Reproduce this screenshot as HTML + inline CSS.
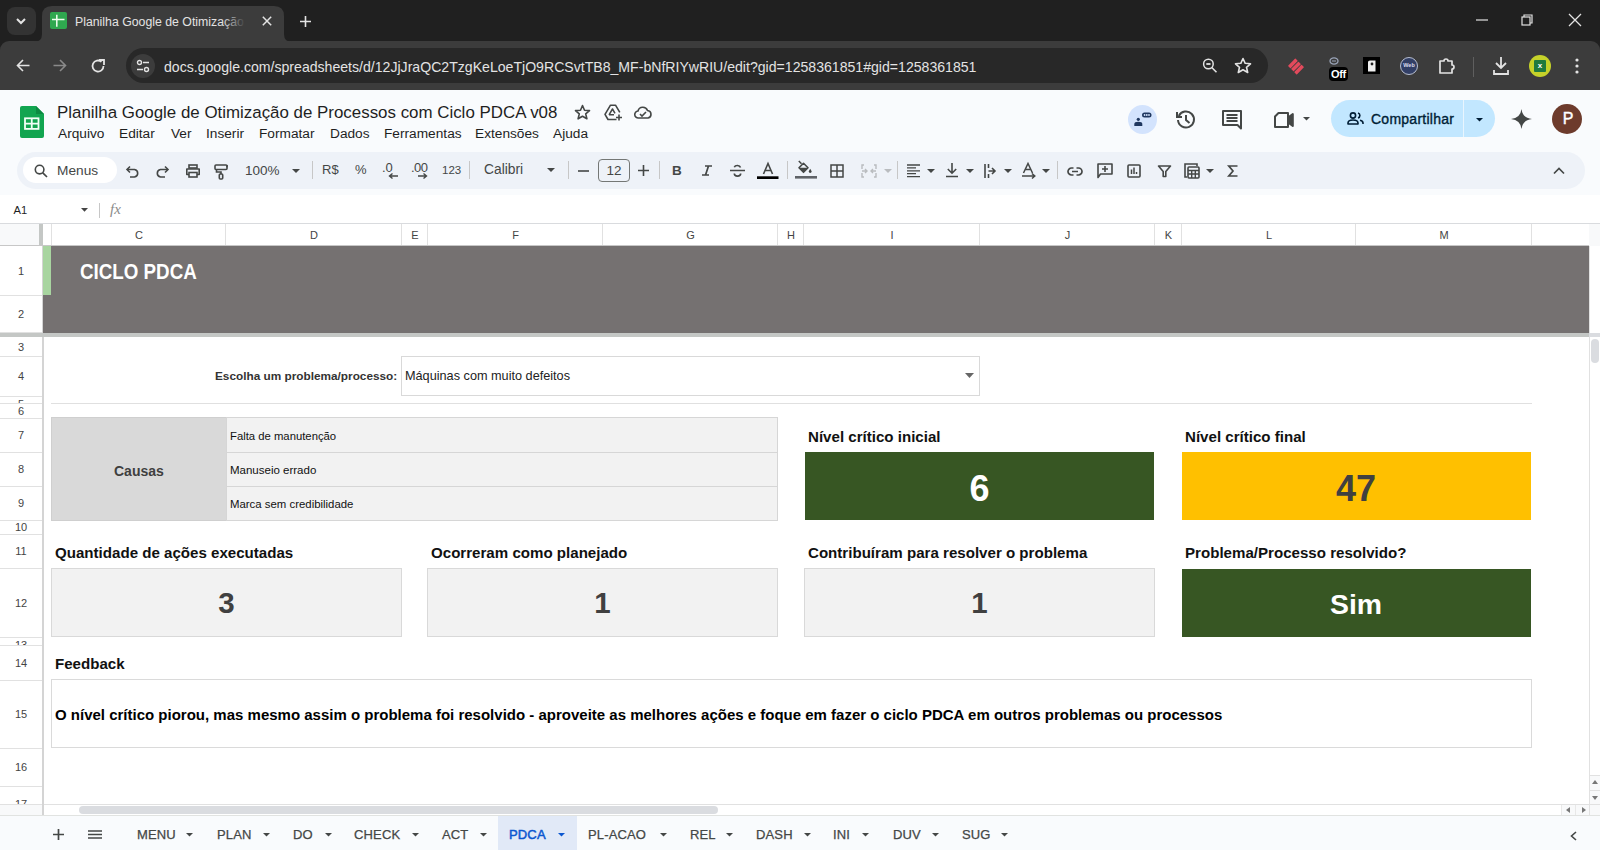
<!DOCTYPE html>
<html><head><meta charset="utf-8">
<style>
*{box-sizing:border-box;margin:0;padding:0}
html,body{width:1600px;height:850px;overflow:hidden;background:#fff;font-family:"Liberation Sans",sans-serif}
.a{position:absolute}
svg{position:absolute;overflow:visible}
/* chrome */
#tabstrip{left:0;top:0;width:1600px;height:90px;background:#202020}
#toolbar{left:0;top:41px;width:1600px;height:49px;background:#3c3c3c;border-radius:9px 9px 0 0}
#tab{left:42px;top:6px;width:242px;height:36px;background:#3c3c3c;border-radius:10px 10px 0 0}
#urlbox{left:126px;top:48px;width:1142px;height:35px;background:#282828;border-radius:18px}
/* sheets */
#app{left:0;top:90px;width:1600px;height:133px;background:#f9fbfd}
#tb{left:17px;top:152px;width:1568px;height:37px;background:#eef2f8;border-radius:19px}
#fbar{left:0;top:195px;width:1600px;height:28px;background:#fff}
.menu{top:126px;font-size:13.7px;color:#1f1f1f;white-space:nowrap}
.colh{top:224px;height:22px;background:#fff;border-right:1px solid #e1e1e1;border-bottom:1px solid #c0c0c0;font-size:11px;color:#444;text-align:center;line-height:22px}
.rowh{left:0;width:42px;background:#fff;border-bottom:1px solid #e1e1e1;border-right:1px solid #c0c0c0;font-size:11px;color:#444;text-align:center}
.cal{font-family:"Liberation Sans",sans-serif}
.tabs{top:815px;height:35px;background:#f9fbfd}
.st{top:826px;font-size:13px;color:#444;letter-spacing:0.3px}
.ch{top:224px;height:22px;font-size:11px;color:#444;text-align:center;line-height:22px}
.vl{top:224px;width:1px;height:22px;background:#e1e1e1}
.rh{left:0;width:43px;overflow:hidden;border-bottom:1px solid #e1e1e1;background:#fff}
.rh span{position:absolute;left:0;width:42px;text-align:center;font-size:11px;color:#444;line-height:14px}
.t{white-space:nowrap;font-weight:bold;line-height:1.15}
.lbl{font-size:15.1px;color:#111}
.big{font-size:29.5px;text-align:center;line-height:40px}
.box{top:568px;height:69px;background:#f2f2f2;border:1px solid #d9d9d9}
.ui{white-space:nowrap;color:#444746;line-height:1.15}
.sep{top:161px;width:1px;height:18px;background:#c7c7c7}
.st{top:828px;font-size:13px;color:#444746;white-space:nowrap;line-height:1.15;-webkit-text-stroke:0.25px #444746;letter-spacing:0.15px}
.ar{position:absolute;top:833px;width:7px;height:4px;fill:#444746}
</style></head><body>
<!-- ============ CHROME ============ -->
<div class="a" id="tabstrip"></div>
<div class="a" id="toolbar"></div>
<div class="a" style="left:7px;top:7px;width:29px;height:28px;background:#333;border-radius:8px"></div>
<svg style="left:15px;top:15px" width="12" height="12"><path d="M2 4 L6 8 L10 4" stroke="#e3e3e3" stroke-width="2" fill="none"/></svg>
<svg style="left:0;top:0" width="320" height="50"><path d="M34 42 Q42 42 42 34 V16 Q42 6 52 6 H274 Q284 6 284 16 V34 Q284 42 292 42 Z" fill="#3c3c3c"/></svg>
<div class="a" style="left:50px;top:12px;width:17px;height:17px;background:#2fa84f;border-radius:2px"></div>
<svg style="left:50px;top:12px" width="17" height="17"><path d="M6.8 2.8 V14.7 M2 7.4 H14.5" stroke="#f0fff0" stroke-width="1.5"/></svg>
<div class="a" style="left:75px;top:15px;font-size:12.3px;color:#e3e3e3;white-space:nowrap;width:172px;overflow:hidden">Planilha Google de Otimização de</div><div class="a" style="left:222px;top:10px;width:26px;height:22px;background:linear-gradient(90deg,rgba(60,60,60,0),#3c3c3c 90%)"></div>
<svg style="left:262px;top:16px" width="10" height="10"><path d="M0.8 0.8 L9.2 9.2 M9.2 0.8 L0.8 9.2" stroke="#e3e3e3" stroke-width="1.5"/></svg>
<svg style="left:300px;top:15.5px" width="11" height="11"><path d="M5.5 0 V11 M0 5.5 H11" stroke="#e3e3e3" stroke-width="1.6"/></svg>
<!-- window controls -->
<svg style="left:1476px;top:19px" width="12" height="2"><path d="M0 1 H12" stroke="#e3e3e3" stroke-width="1.2"/></svg>
<svg style="left:1521px;top:14px" width="12" height="12"><rect x="1" y="3" width="8" height="8" stroke="#e3e3e3" fill="none" stroke-width="1.2"/><path d="M3 3 V1 H11 V9 H9" stroke="#e3e3e3" fill="none" stroke-width="1.2"/></svg>
<svg style="left:1569px;top:14px" width="12" height="12"><path d="M0 0 L12 12 M12 0 L0 12" stroke="#e3e3e3" stroke-width="1.3"/></svg>


<svg style="left:16px;top:59px" width="14" height="14"><path d="M13.5 6.5 H1.5 M7 1 L1.5 6.5 L7 12" stroke="#e3e3e3" stroke-width="1.6" fill="none"/></svg>
<svg style="left:53px;top:59px" width="14" height="14"><path d="M0.5 6.5 H12.5 M7 1 L12.5 6.5 L7 12" stroke="#8a8a8a" stroke-width="1.6" fill="none"/></svg>
<svg style="left:90px;top:58px" width="16" height="16"><path d="M13.5 8 A5.5 5.5 0 1 1 11.5 3.8" stroke="#e3e3e3" stroke-width="1.8" fill="none"/><path d="M9 2 H14 V7" stroke="#e3e3e3" stroke-width="1.8" fill="none"/></svg>
<div class="a" id="urlbox"></div>
<div class="a" style="left:131px;top:54px;width:24px;height:24px;border-radius:12px;background:#3c3c3c"></div>
<svg style="left:136px;top:59px" width="14" height="14"><circle cx="3.5" cy="3.5" r="2" stroke="#e3e3e3" stroke-width="1.4" fill="none"/><path d="M7 3.5 H13 M1 10.5 H7" stroke="#e3e3e3" stroke-width="1.4"/><circle cx="10.5" cy="10.5" r="2" stroke="#e3e3e3" stroke-width="1.4" fill="none"/></svg>
<div class="a" style="left:164px;top:58.5px;font-size:14.1px;color:#e3e3e3;white-space:nowrap">docs.google.com/spreadsheets/d/12JjJraQC2TzgKeLoeTjO9RCSvtTB8_MF-bNfRIYwRIU/edit?gid=1258361851#gid=1258361851</div>
<svg style="left:1201px;top:57px" width="18" height="18"><circle cx="7.4" cy="7" r="4.8" stroke="#e3e3e3" stroke-width="1.5" fill="none"/><path d="M10.8 10.5 L15.5 15.2" stroke="#e3e3e3" stroke-width="1.6"/><path d="M5.3 7 H9.5" stroke="#e3e3e3" stroke-width="1.8"/></svg>
<svg style="left:1234px;top:57px" width="18" height="18"><path d="M9 1.5 L11.2 6.3 L16.5 6.8 L12.5 10.3 L13.7 15.5 L9 12.8 L4.3 15.5 L5.5 10.3 L1.5 6.8 L6.8 6.3 Z" stroke="#e3e3e3" stroke-width="1.6" fill="none" stroke-linejoin="round"/></svg>
<!-- extensions -->
<svg style="left:1287px;top:57px" width="18" height="19"><g transform="rotate(-45 9 9.5)" fill="#e24a5c"><rect x="3.75" y="3.3" width="10.5" height="3.6" rx="0.6"/><rect x="3.75" y="7.7" width="10.5" height="3.6" rx="0.6"/><rect x="3.75" y="12.1" width="10.5" height="3.6" rx="0.6"/></g></svg>
<svg style="left:1329px;top:57px" width="11" height="9"><ellipse cx="5" cy="4" rx="4" ry="3.2" stroke="#9aa4b8" stroke-width="1.3" fill="none"/><path d="M3 4 H7" stroke="#9aa4b8" stroke-width="1"/></svg>
<div class="a" style="left:1329px;top:67px;width:19px;height:14px;background:#000;border-radius:4px;color:#fff;font-size:11px;font-weight:bold;line-height:14px;text-align:center;letter-spacing:-0.3px">Off</div>
<div class="a" style="left:1363px;top:57px;width:17px;height:17px;background:#000"></div>
<svg style="left:1367px;top:60px" width="9" height="12"><path d="M1 2 Q1 0.5 3 0.5 H8.5 V11.5 H1 Z" fill="#f0f0f0"/><circle cx="5" cy="4" r="1.4" fill="#222"/></svg>
<div class="a" style="left:1400px;top:57px;width:18px;height:18px;border-radius:9px;background:#323f66;border:1.5px solid #b8bfd0"></div>
<div class="a" style="left:1402px;top:62px;width:14px;font-size:5.5px;font-weight:bold;color:#dde;text-align:center;line-height:6px">Web</div>
<svg style="left:1437px;top:57px" width="19" height="18"><path d="M3 4 H7 A2 2 0 0 1 11 4 H15 V8 A2 2 0 0 1 15 12 V16 H3 Z" stroke="#e3e3e3" stroke-width="1.7" fill="none" stroke-linejoin="round"/></svg>
<div class="a" style="left:1473px;top:57px;width:1px;height:20px;background:#5f5f5f"></div>
<svg style="left:1492px;top:56px" width="18" height="20"><path d="M9 1 V12 M4 7 L9 12 L14 7 M2 14 V18 H16 V14" stroke="#e3e3e3" stroke-width="1.8" fill="none"/></svg>
<div class="a" style="left:1529px;top:55px;width:22px;height:22px;border-radius:11px;background:#c5d22a"></div>
<div class="a" style="left:1534px;top:60px;width:12px;height:12px;background:#1f7a3e;border-radius:1px;color:#fff;font-size:8px;font-weight:bold;line-height:12px;text-align:center">x</div>
<svg style="left:1574px;top:57px" width="6" height="18"><circle cx="3" cy="3" r="1.6" fill="#e3e3e3"/><circle cx="3" cy="9" r="1.6" fill="#e3e3e3"/><circle cx="3" cy="15" r="1.6" fill="#e3e3e3"/></svg>

<!-- ============ SHEETS APP HEADER ============ -->
<div class="a" id="app"></div>
<svg style="left:20px;top:106px" width="24" height="32"><path d="M2 0 H16 L24 8 V30 A2 2 0 0 1 22 32 H2 A2 2 0 0 1 0 30 V2 A2 2 0 0 1 2 0 Z" fill="#12a550"/><path d="M16 0 V8 H24 Z" fill="#0d8a42"/><rect x="5" y="12.3" width="13.5" height="10.6" fill="none" stroke="#f2fff6" stroke-width="1.8"/><path d="M5 17.6 H18.5 M11.75 12.3 V22.9" stroke="#f2fff6" stroke-width="1.8"/></svg>
<div class="a" style="left:57px;top:103px;font-size:16.9px;color:#1f1f1f;white-space:nowrap">Planilha Google de Otimização de Processos com Ciclo PDCA v08</div>
<div class="a menu" style="left:58px">Arquivo</div>
<div class="a menu" style="left:119px">Editar</div>
<div class="a menu" style="left:171px">Ver</div>
<div class="a menu" style="left:206px">Inserir</div>
<div class="a menu" style="left:259px">Formatar</div>
<div class="a menu" style="left:330px">Dados</div>
<div class="a menu" style="left:384px">Ferramentas</div>
<div class="a menu" style="left:475px">Extensões</div>
<div class="a menu" style="left:553px">Ajuda</div>

<!-- toolbar pill -->
<div class="a" id="tb"></div>
<div class="a" style="left:23px;top:157px;width:94px;height:26px;background:#fff;border-radius:13px"></div>
<div class="a ui" style="left:57px;top:163px;font-size:13.7px;color:#444746">Menus</div>

<!-- toolbar icons -->
<svg style="left:34px;top:164px" width="14" height="14"><circle cx="5.6" cy="5.6" r="4.3" stroke="#444746" stroke-width="1.6" fill="none"/><path d="M8.8 8.8 L13 13" stroke="#444746" stroke-width="1.7"/></svg>
<svg style="left:126px;top:165px" width="14" height="14"><path d="M4 1.5 L1 4.5 L4 7.5" stroke="#444746" stroke-width="1.6" fill="none"/><path d="M1.5 4.5 H8.5 A3.8 3.8 0 0 1 8.5 12 H4" stroke="#444746" stroke-width="1.6" fill="none"/></svg>
<svg style="left:155px;top:165px" width="14" height="14"><path d="M10 1.5 L13 4.5 L10 7.5" stroke="#444746" stroke-width="1.6" fill="none"/><path d="M12.5 4.5 H5.5 A3.8 3.8 0 0 0 5.5 12 H10" stroke="#444746" stroke-width="1.6" fill="none"/></svg>
<svg style="left:185px;top:164px" width="16" height="14"><rect x="4" y="1" width="8" height="3" stroke="#444746" stroke-width="1.6" fill="none"/><path d="M4 10.5 H1.8 V5 H14.2 V10.5 H12" stroke="#444746" stroke-width="1.6" fill="none" stroke-linejoin="round"/><rect x="4" y="8.5" width="8" height="4.5" stroke="#444746" stroke-width="1.6" fill="none"/></svg>
<svg style="left:214px;top:164px" width="14" height="16"><rect x="1" y="1" width="12" height="4.5" rx="1" stroke="#444746" stroke-width="1.6" fill="none"/><path d="M13 3.2 V1 M2.5 5.5 V8 H7 V10" stroke="#444746" stroke-width="1.6" fill="none"/><rect x="5.3" y="10" width="3.4" height="5" rx="1" stroke="#444746" stroke-width="1.6" fill="none"/></svg>
<div class="a ui" style="left:245px;top:163px;font-size:13.5px">100%</div>
<svg style="left:292px;top:169px" width="8" height="4"><path d="M0 0 H8 L4 4 Z" fill="#444746"/></svg>
<div class="a sep" style="left:312px"></div>
<div class="a ui" style="left:322px;top:163px;font-size:13px">R$</div>
<div class="a ui" style="left:355px;top:163px;font-size:13px">%</div>
<div class="a ui" style="left:382px;top:161px;font-size:13px">.0</div>
<svg style="left:388px;top:173px" width="10" height="6"><path d="M10 3 H2 M4.5 0.5 L1.5 3 L4.5 5.5" stroke="#444746" stroke-width="1.4" fill="none"/></svg>
<div class="a ui" style="left:411px;top:161px;font-size:13px;letter-spacing:-0.5px">.00</div>
<svg style="left:418px;top:173px" width="10" height="6"><path d="M0 3 H8 M5.5 0.5 L8.5 3 L5.5 5.5" stroke="#444746" stroke-width="1.4" fill="none"/></svg>
<div class="a ui" style="left:442px;top:164px;font-size:11.5px">123</div>
<div class="a sep" style="left:469px"></div>
<div class="a ui" style="left:484px;top:162px;font-size:13.8px">Calibri</div>
<svg style="left:547px;top:168px" width="8" height="4"><path d="M0 0 H8 L4 4 Z" fill="#444746"/></svg>
<div class="a sep" style="left:568px"></div>
<svg style="left:578px;top:170px" width="11" height="2"><path d="M0 1 H11" stroke="#444746" stroke-width="1.6"/></svg>
<div class="a" style="left:598px;top:159px;width:32px;height:23px;border:1px solid #747775;border-radius:4px"></div>
<div class="a ui" style="left:598px;top:163px;width:32px;text-align:center;font-size:13.5px">12</div>
<svg style="left:638px;top:165px" width="11" height="11"><path d="M5.5 0 V11 M0 5.5 H11" stroke="#444746" stroke-width="1.6"/></svg>
<div class="a sep" style="left:659px"></div>
<div class="a ui" style="left:672px;top:163px;font-size:13.5px;font-weight:bold">B</div>
<svg style="left:701px;top:165px" width="12" height="11"><path d="M4 1 H11 M1 10 H8 M7.5 1 L4.5 10" stroke="#444746" stroke-width="1.7" fill="none"/></svg>
<svg style="left:730px;top:164px" width="15" height="13"><path d="M0 6.5 H15" stroke="#444746" stroke-width="1.5"/><path d="M10.5 3.5 A3.2 2.6 0 0 0 4.3 3.3" stroke="#444746" stroke-width="1.6" fill="none"/><path d="M4.3 9.5 A3.2 2.6 0 0 0 10.7 9.5" stroke="#444746" stroke-width="1.6" fill="none"/></svg>
<svg style="left:757px;top:162px" width="22" height="18"><path d="M6.5 12 L11 1.5 L15.5 12 M8 8.5 H14" stroke="#444746" stroke-width="1.6" fill="none"/><rect x="0" y="14.3" width="21.5" height="2.7" fill="#000"/></svg>
<div class="a sep" style="left:787px"></div>
<svg style="left:795px;top:160px" width="22" height="20"><path d="M3.8 1 L6.5 3.8" stroke="#444746" stroke-width="1.5"/><path d="M8.5 3.3 L13 7.8 L8.5 12.3 L4 7.8 Z" stroke="#444746" stroke-width="1.6" fill="none" stroke-linejoin="round"/><path d="M4 7.8 H13 L8.5 12.3 Z" fill="#444746"/><path d="M15.2 8.8 Q13.8 10.8 13.8 11.6 A1.4 1.4 0 0 0 16.6 11.6 Q16.6 10.8 15.2 8.8 Z" fill="#444746"/><rect x="0" y="16" width="22" height="2.6" fill="#5f6368"/></svg>
<svg style="left:830px;top:164px" width="14" height="14"><rect x="1" y="1" width="12" height="12" stroke="#444746" stroke-width="1.5" fill="none"/><path d="M7 1 V13 M1 7 H13" stroke="#444746" stroke-width="1.5"/></svg>
<svg style="left:861px;top:164px" width="16" height="14"><path d="M3 1 H1 V5 M1 9 V13 H3 M13 1 H15 V5 M15 9 V13 H13" stroke="#b9bcbf" stroke-width="1.4" fill="none"/><path d="M1 7 H6 M4 5 L6 7 L4 9 M15 7 H10 M12 5 L10 7 L12 9" stroke="#b9bcbf" stroke-width="1.4" fill="none"/></svg>
<svg style="left:884px;top:169px" width="8" height="4"><path d="M0 0 H8 L4 4 Z" fill="#b9bcbf"/></svg>
<div class="a sep" style="left:897px"></div>
<svg style="left:907px;top:164px" width="14" height="14"><path d="M0 1 H13 M0 3.9 H9 M0 6.8 H13 M0 9.7 H9 M0 12.6 H13" stroke="#444746" stroke-width="1.3"/></svg>
<svg style="left:927px;top:169px" width="8" height="4"><path d="M0 0 H8 L4 4 Z" fill="#444746"/></svg>
<svg style="left:946px;top:163px" width="12" height="15"><path d="M6 0 V10 M1.8 6 L6 10.2 L10.2 6 M0 13.5 H12" stroke="#444746" stroke-width="1.6" fill="none"/></svg>
<svg style="left:966px;top:169px" width="8" height="4"><path d="M0 0 H8 L4 4 Z" fill="#444746"/></svg>
<svg style="left:984px;top:164px" width="12" height="14"><path d="M1 0 V14 M4.5 0 V4 M4.5 10 V14 M4.5 7 H11 M8 4 L11 7 L8 10" stroke="#444746" stroke-width="1.6" fill="none"/></svg>
<svg style="left:1004px;top:169px" width="8" height="4"><path d="M0 0 H8 L4 4 Z" fill="#444746"/></svg>
<svg style="left:1022px;top:163px" width="14" height="15"><path d="M1.5 10 L6 0.5 L10.5 10 M3.2 6.5 H8.8 M0 13 H12.5 M10 10.5 L12.8 13 L10 15.5" stroke="#444746" stroke-width="1.5" fill="none"/></svg>
<svg style="left:1042px;top:169px" width="8" height="4"><path d="M0 0 H8 L4 4 Z" fill="#444746"/></svg>
<div class="a sep" style="left:1057px"></div>
<svg style="left:1067px;top:167px" width="16" height="9"><path d="M6.5 1 H4.5 A3.5 3.5 0 0 0 4.5 8 H6.5 M9.5 1 H11.5 A3.5 3.5 0 0 1 11.5 8 H9.5 M5 4.5 H11" stroke="#444746" stroke-width="1.7" fill="none"/></svg>
<svg style="left:1097px;top:163px" width="16" height="15"><path d="M1 14.5 V1 H15 V11 H3.5 Z" stroke="#444746" stroke-width="1.6" fill="none" stroke-linejoin="round"/><path d="M8 3 V9 M5 6 H11" stroke="#444746" stroke-width="1.6"/></svg>
<svg style="left:1127px;top:164px" width="14" height="14"><rect x="1" y="1" width="12" height="12" rx="1" stroke="#444746" stroke-width="1.6" fill="none"/><path d="M4.5 5.5 V10 M7 3.5 V10 M9.5 8 V10" stroke="#444746" stroke-width="1.5"/></svg>
<svg style="left:1158px;top:165px" width="13" height="12"><path d="M0.5 1 H12.5 L7.8 6.5 V11.5 H5.2 V6.5 Z" stroke="#444746" stroke-width="1.6" fill="none" stroke-linejoin="round"/></svg>
<svg style="left:1184px;top:163px" width="16" height="16"><path d="M3 14 H1 V1 H13 V3" stroke="#444746" stroke-width="1.6" fill="none"/><rect x="4" y="4" width="11" height="11" rx="1" stroke="#444746" stroke-width="1.6" fill="none"/><path d="M4 7.5 H15 M4 11 H15 M7.7 7.5 V15 M11.3 7.5 V15" stroke="#444746" stroke-width="1.4"/></svg>
<svg style="left:1206px;top:169px" width="8" height="4"><path d="M0 0 H8 L4 4 Z" fill="#444746"/></svg>
<svg style="left:1228px;top:165px" width="10" height="12"><path d="M9.5 1 H0.8 L5 6 L0.8 11 H9.5" stroke="#444746" stroke-width="1.7" fill="none" stroke-linejoin="miter"/></svg>
<svg style="left:1553px;top:167px" width="12" height="8"><path d="M1 6.5 L6 1.5 L11 6.5" stroke="#444746" stroke-width="1.7" fill="none"/></svg>

<!-- header right -->
<div class="a" style="left:1128px;top:105px;width:29px;height:29px;border-radius:15px;background:#d3e3fd"></div>
<svg style="left:1133px;top:111px" width="20" height="16"><circle cx="5.3" cy="8.3" r="1.6" fill="#1f3760"/><path d="M1.3 15 V13 Q1.3 10.8 5.3 10.8 Q9.3 10.8 9.3 13 V15 Z" fill="#1f3760"/><rect x="9" y="1.5" width="9.5" height="5" rx="2.5" fill="#1f3760"/><circle cx="11.6" cy="4" r="0.9" fill="#d3e3fd"/><circle cx="13.8" cy="4" r="0.9" fill="#d3e3fd"/><circle cx="16" cy="4" r="0.9" fill="#d3e3fd"/></svg>
<svg style="left:1176px;top:110px" width="20" height="19"><path d="M2.8 6 A8 8 0 1 1 2 10" stroke="#444746" stroke-width="2" fill="none"/><path d="M1 2 V7 H6" stroke="#444746" stroke-width="2" fill="none"/><path d="M10 5 V10 L13.5 13" stroke="#444746" stroke-width="2" fill="none"/></svg>
<svg style="left:1222px;top:110px" width="20" height="19"><path d="M1 1 H19 V18.5 L15.5 15 H1 Z" stroke="#444746" stroke-width="2" fill="none" stroke-linejoin="round"/><path d="M4.5 5 H15.5 M4.5 8 H15.5 M4.5 11 H15.5" stroke="#444746" stroke-width="1.8"/></svg>
<svg style="left:1274px;top:112px" width="20" height="16"><path d="M4.5 1 H14 V15 H1 V4.5 Z" stroke="#444746" stroke-width="2" fill="none" stroke-linejoin="round"/><path d="M14 5.5 L18.8 2 V14 L14 10.5 Z" stroke="#444746" stroke-width="2" fill="#444746" stroke-linejoin="round"/></svg>
<svg style="left:1303px;top:117px" width="7" height="4"><path d="M0 0 H7 L3.5 3.5 Z" fill="#444746"/></svg>
<div class="a" style="left:1331px;top:100px;width:164px;height:37px;border-radius:19px;background:#c2e7ff"></div>
<div class="a" style="left:1463px;top:100px;width:1px;height:37px;background:#f9fbfd;opacity:0.7"></div>
<svg style="left:1347px;top:112px" width="17" height="13"><circle cx="6" cy="3.5" r="2.6" stroke="#001d35" stroke-width="1.6" fill="none"/><path d="M1 12 V11 Q1 8 6 8 Q11 8 11 11 V12 Z" stroke="#001d35" stroke-width="1.6" fill="none" stroke-linejoin="round"/><path d="M11 1 A2.6 2.6 0 0 1 11 6 M13 8.3 Q16 9 16 11 V12" stroke="#001d35" stroke-width="1.6" fill="none"/></svg>
<div class="a ui" style="left:1371px;top:110.5px;font-size:14px;letter-spacing:0.25px;color:#001d35;-webkit-text-stroke:0.35px #001d35">Compartilhar</div>
<svg style="left:1476px;top:118px" width="7" height="4"><path d="M0 0 H7 L3.5 3.5 Z" fill="#001d35"/></svg>
<svg style="left:1511px;top:109px" width="21" height="20"><path d="M10.5 0 Q11.5 9 21 10 Q11.5 11 10.5 20 Q9.5 11 0 10 Q9.5 9 10.5 0 Z" fill="#444746"/></svg>
<div class="a" style="left:1552px;top:104px;width:30px;height:30px;border-radius:15px;background:#6d3b2c"></div>
<div class="a ui" style="left:1553px;top:110px;width:30px;text-align:center;font-size:16px;color:#fff;-webkit-text-stroke:0.4px #fff">P</div>
<!-- title star etc -->
<svg style="left:574px;top:104px" width="17" height="17"><path d="M8.5 1.5 L10.5 6.2 L15.5 6.6 L11.7 9.9 L12.9 14.8 L8.5 12.2 L4.1 14.8 L5.3 9.9 L1.5 6.6 L6.5 6.2 Z" stroke="#444746" stroke-width="1.6" fill="none" stroke-linejoin="round"/></svg>
<svg style="left:604px;top:104px" width="19" height="17"><path d="M12.5 15.5 H4 L1 10.3 L6.5 1.2 H11.5 L15.8 8.4" stroke="#444746" stroke-width="1.6" fill="none" stroke-linejoin="round"/><path d="M5 10.8 L8.5 5 L11 9.3 M5 10.8 H10" stroke="#444746" stroke-width="1.5" fill="none" stroke-linejoin="round"/><path d="M15 10.5 V16.5 M12 13.5 H18" stroke="#444746" stroke-width="1.6"/></svg>
<svg style="left:634px;top:106px" width="18" height="13"><path d="M4.5 12 A3.5 3.5 0 0 1 4 5 A5 5 0 0 1 13.5 4.5 A3.8 3.8 0 0 1 14 12 Z" stroke="#444746" stroke-width="1.6" fill="none"/><path d="M6 8 L8 10 L12 6" stroke="#444746" stroke-width="1.6" fill="none"/></svg>

<!-- scrollbars -->
<div class="a" style="left:1589px;top:246px;width:11px;height:569px;background:#fff;border-left:1px solid #e1e1e1"></div>
<div class="a" style="left:1589px;top:224px;width:11px;height:22px;background:#f8f9fa"></div>
<div class="a" style="left:1589px;top:333px;width:11px;height:4px;background:#dadce0"></div>
<div class="a" style="left:1591px;top:339px;width:8px;height:24px;border-radius:4px;background:#dadce0"></div>
<div class="a" style="left:1590px;top:775px;width:10px;height:15px;background:#f8f9fa;border-top:1px solid #e1e1e1"></div>
<svg style="left:1592px;top:780px" width="6" height="4"><path d="M0 4 H6 L3 0 Z" fill="#777"/></svg>
<div class="a" style="left:1590px;top:790px;width:10px;height:14px;background:#f8f9fa;border-top:1px solid #e1e1e1"></div>
<svg style="left:1592px;top:796px" width="6" height="4"><path d="M0 0 H6 L3 4 Z" fill="#777"/></svg>
<div class="a" style="left:0;top:804px;width:1600px;height:1px;background:#e1e1e1"></div>
<div class="a" style="left:0;top:805px;width:42px;height:10px;background:#f8f9fa"></div>
<div class="a" style="left:43px;top:805px;width:1546px;height:10px;background:#fff"></div>
<div class="a" style="left:79px;top:806px;width:639px;height:8px;border-radius:4px;background:#dadce0"></div>
<div class="a" style="left:1561px;top:805px;width:28px;height:10px;background:#f8f9fa;border-left:1px solid #e8e8e8"></div>
<div class="a" style="left:1575px;top:805px;width:1px;height:10px;background:#e8e8e8"></div>
<svg style="left:1566px;top:807px" width="4" height="6"><path d="M4 0 V6 L0 3 Z" fill="#777"/></svg>
<svg style="left:1582px;top:807px" width="4" height="6"><path d="M0 0 V6 L4 3 Z" fill="#777"/></svg>
<div class="a" style="left:1589px;top:805px;width:11px;height:10px;background:#f8f9fa;border-left:1px solid #e1e1e1"></div>

<!-- formula bar -->
<div class="a" id="fbar"></div>
<div class="a" style="left:13.5px;top:203.5px;font-size:11.2px;color:#1f1f1f">A1</div>
<svg style="left:81px;top:208px" width="7" height="4"><path d="M0 0 H7 L3.5 3.7 Z" fill="#444"/></svg>
<div class="a" style="left:99px;top:203px;width:1px;height:15px;background:#c7c7c7"></div>
<div class="a" style="left:110px;top:201px;font-size:15px;color:#8a8a8a;font-family:'Liberation Serif',serif;font-style:italic">fx</div>

<!-- ============ GRID ============ -->
<!-- GRID HEADERS -->
<div class="a" style="left:0;top:223px;width:1600px;height:1px;background:#d9dbde"></div>
<div class="a" style="left:0;top:224px;width:39px;height:22px;background:#f8f9fa"></div>
<div class="a" style="left:39px;top:224px;width:4px;height:22px;background:#c4c7c5"></div>
<div class="a ch" style="left:52px;width:174px">C</div><div class="a vl" style="left:51px"></div>
<div class="a ch" style="left:226px;width:176px">D</div><div class="a vl" style="left:225px"></div>
<div class="a ch" style="left:402px;width:26px">E</div><div class="a vl" style="left:401px"></div>
<div class="a ch" style="left:428px;width:175px">F</div><div class="a vl" style="left:427px"></div>
<div class="a ch" style="left:603px;width:175px">G</div><div class="a vl" style="left:602px"></div>
<div class="a ch" style="left:778px;width:26px">H</div><div class="a vl" style="left:777px"></div>
<div class="a ch" style="left:804px;width:176px">I</div><div class="a vl" style="left:803px"></div>
<div class="a ch" style="left:980px;width:175px">J</div><div class="a vl" style="left:979px"></div>
<div class="a ch" style="left:1155px;width:27px">K</div><div class="a vl" style="left:1154px"></div>
<div class="a ch" style="left:1182px;width:174px">L</div><div class="a vl" style="left:1181px"></div>
<div class="a ch" style="left:1356px;width:176px">M</div><div class="a vl" style="left:1355px"></div>
<div class="a ch" style="left:1532px;width:57px"></div><div class="a vl" style="left:1531px"></div>
<div class="a" style="left:0;top:245px;width:1589px;height:1px;background:#c7c7c7"></div>
<div class="a rh" style="top:246px;height:50px"><span style="top:17.6px">1</span></div>
<div class="a rh" style="top:296px;height:37px"><span style="top:11.1px">2</span></div>
<div class="a rh" style="top:338px;height:19px"><span style="top:1.6px">3</span></div>
<div class="a rh" style="top:357px;height:40px"><span style="top:12.1px">4</span></div>
<div class="a rh" style="top:397px;height:7px"><span style="top:0.1px">5</span></div>
<div class="a rh" style="top:404px;height:15px"><span style="top:-0.4px">6</span></div>
<div class="a rh" style="top:419px;height:34px"><span style="top:9.1px">7</span></div>
<div class="a rh" style="top:453px;height:34px"><span style="top:9.1px">8</span></div>
<div class="a rh" style="top:487px;height:34px"><span style="top:9.1px">9</span></div>
<div class="a rh" style="top:521px;height:14px"><span style="top:-0.9px">10</span></div>
<div class="a rh" style="top:535px;height:34px"><span style="top:9.1px">11</span></div>
<div class="a rh" style="top:569px;height:69px"><span style="top:26.6px">12</span></div>
<div class="a rh" style="top:638px;height:8px"><span style="top:0.1px">13</span></div>
<div class="a rh" style="top:646px;height:35px"><span style="top:9.6px">14</span></div>
<div class="a rh" style="top:681px;height:68px"><span style="top:26.1px">15</span></div>
<div class="a rh" style="top:749px;height:38px"><span style="top:11.1px">16</span></div>
<div class="a rh" style="top:787px;height:18px"><span style="top:10.1px">17</span></div>
<div class="a" style="left:42px;top:246px;width:2px;height:569px;background:#d4d4d4"></div>
<div class="a" style="left:0;top:333px;width:1589px;height:4px;background:#c4c7c5"></div>
<!-- CONTENT -->
<div class="a" style="left:43px;top:246px;width:1546px;height:87px;background:#757171"></div>
<div class="a" style="left:43px;top:246px;width:8px;height:49px;background:#a8d5a0"></div>
<div class="a" style="left:80px;top:259px;font-size:21.7px;line-height:25px;font-weight:bold;color:#fff;white-space:nowrap;transform:scaleX(0.865);transform-origin:0 0">CICLO PDCA</div>

<div class="a t" style="left:215px;top:369.5px;font-size:11.8px;color:#333">Escolha um problema/processo:</div>
<div class="a" style="left:401px;top:356px;width:579px;height:40px;border:1px solid #d9d9d9;background:#fff"></div>
<div class="a t" style="left:405px;top:369px;font-size:12.7px;font-weight:normal;color:#222">Máquinas com muito defeitos</div>
<svg style="left:965px;top:373px" width="9" height="5"><path d="M0 0 H9 L4.5 5 Z" fill="#666"/></svg>
<div class="a" style="left:51px;top:403px;width:1481px;height:1px;background:#e0e0e0"></div>

<div class="a" style="left:51px;top:417px;width:176px;height:104px;background:#d9d9d9;border:1px solid #cfcfcf"></div>
<div class="a t" style="left:114px;top:463px;font-size:14px;color:#3f3f3f">Causas</div>
<div class="a" style="left:226px;top:417px;width:552px;height:104px;background:#f2f2f2;border:1px solid #d6d6d6"></div>
<div class="a" style="left:227px;top:452px;width:551px;height:1px;background:#d6d6d6"></div>
<div class="a" style="left:227px;top:486px;width:551px;height:1px;background:#d6d6d6"></div>
<div class="a t" style="left:230px;top:430px;font-size:11.3px;font-weight:normal;color:#111">Falta de manutenção</div>
<div class="a t" style="left:230px;top:464px;font-size:11.5px;font-weight:normal;color:#111">Manuseio errado</div>
<div class="a t" style="left:230px;top:498px;font-size:11.4px;font-weight:normal;color:#111">Marca sem credibilidade</div>

<div class="a t lbl" style="left:808px;top:427.5px">Nível crítico inicial</div>
<div class="a" style="left:805px;top:452px;width:349px;height:68px;background:#375623"></div>
<div class="a t big" style="left:804px;top:468.5px;width:351px;color:#fff;font-size:36px">6</div>
<div class="a t lbl" style="left:1185px;top:427.5px">Nível crítico final</div>
<div class="a" style="left:1182px;top:452px;width:349px;height:68px;background:#ffc000"></div>
<div class="a t big" style="left:1181px;top:468.5px;width:350px;color:#404040;font-size:36px">47</div>

<div class="a t lbl" style="left:55px;top:544px">Quantidade de ações executadas</div>
<div class="a t lbl" style="left:431px;top:544px">Ocorreram como planejado</div>
<div class="a t lbl" style="left:808px;top:544px">Contribuíram para resolver o problema</div>
<div class="a t lbl" style="left:1185px;top:544px">Problema/Processo resolvido?</div>
<div class="a box" style="left:51px;width:351px"></div>
<div class="a t big" style="left:51px;top:583.3px;width:351px;color:#404040">3</div>
<div class="a box" style="left:427px;width:351px"></div>
<div class="a t big" style="left:427px;top:583.3px;width:351px;color:#404040">1</div>
<div class="a box" style="left:804px;width:351px"></div>
<div class="a t big" style="left:804px;top:583.3px;width:351px;color:#404040">1</div>
<div class="a" style="left:1182px;top:569px;width:349px;height:68px;background:#375623"></div>
<div class="a t big" style="left:1181px;top:584px;width:350px;color:#fff;font-size:28.4px">Sim</div>

<div class="a t lbl" style="left:55px;top:655px">Feedback</div>
<div class="a" style="left:51px;top:679px;width:1481px;height:69px;border:1px solid #dadada;background:#fff"></div>
<div class="a t lbl" style="left:55px;top:706px;font-size:15px;color:#000">O nível crítico piorou, mas mesmo assim o problema foi resolvido - aproveite as melhores ações e foque em fazer o ciclo PDCA em outros problemas ou processos</div>


<!-- sheet tabs -->
<div class="a tabs" style="left:0;width:1600px"></div>
<!-- sheet tabs -->
<div class="a" style="left:0;top:815px;width:1600px;height:1px;background:#e1e3e1"></div>
<div class="a" style="left:498px;top:816px;width:79px;height:34px;background:#e1e9f7"></div>
<svg style="left:53px;top:829px" width="11" height="11"><path d="M5.5 0 V11 M0 5.5 H11" stroke="#444746" stroke-width="1.7"/></svg>
<svg style="left:88px;top:830px" width="14" height="9"><path d="M0 1 H14 M0 4.5 H14 M0 8 H14" stroke="#444746" stroke-width="1.6"/></svg>
<div class="a st" style="left:137px">MENU</div><svg class="ar" style="left:186px"><path d="M0 0 H7 L3.5 3.5 Z"/></svg>
<div class="a st" style="left:217px">PLAN</div><svg class="ar" style="left:263px"><path d="M0 0 H7 L3.5 3.5 Z"/></svg>
<div class="a st" style="left:293px">DO</div><svg class="ar" style="left:325px"><path d="M0 0 H7 L3.5 3.5 Z"/></svg>
<div class="a st" style="left:354px">CHECK</div><svg class="ar" style="left:412px"><path d="M0 0 H7 L3.5 3.5 Z"/></svg>
<div class="a st" style="left:442px">ACT</div><svg class="ar" style="left:480px"><path d="M0 0 H7 L3.5 3.5 Z"/></svg>
<div class="a st" style="left:509px;color:#0b57d0;-webkit-text-stroke:0.5px #0b57d0">PDCA</div><svg class="ar" style="left:558px;fill:#0b57d0"><path d="M0 0 H7 L3.5 3.5 Z"/></svg>
<div class="a st" style="left:588px">PL-ACAO</div><svg class="ar" style="left:660px"><path d="M0 0 H7 L3.5 3.5 Z"/></svg>
<div class="a st" style="left:690px">REL</div><svg class="ar" style="left:726px"><path d="M0 0 H7 L3.5 3.5 Z"/></svg>
<div class="a st" style="left:756px">DASH</div><svg class="ar" style="left:804px"><path d="M0 0 H7 L3.5 3.5 Z"/></svg>
<div class="a st" style="left:833px">INI</div><svg class="ar" style="left:862px"><path d="M0 0 H7 L3.5 3.5 Z"/></svg>
<div class="a st" style="left:893px">DUV</div><svg class="ar" style="left:932px"><path d="M0 0 H7 L3.5 3.5 Z"/></svg>
<div class="a st" style="left:962px">SUG</div><svg class="ar" style="left:1001px"><path d="M0 0 H7 L3.5 3.5 Z"/></svg>
<svg style="left:1570px;top:831px" width="7" height="10"><path d="M6 1 L1.5 5 L6 9" stroke="#444746" stroke-width="1.6" fill="none"/></svg>

</body></html>
